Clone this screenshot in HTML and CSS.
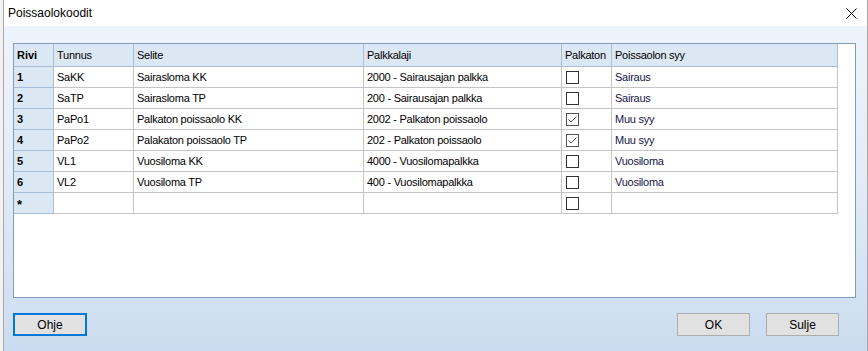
FILE: index.html
```html
<!DOCTYPE html>
<html lang="fi">
<head>
  <meta charset="utf-8" />
  <title>Poissaolokoodit</title>
  <link rel="stylesheet" href="styles.css">
</head>
<body>
  <div class="dialog">
    <!-- title bar -->
    <header class="titlebar">
      <span class="title">Poissaolokoodit</span>
      <span class="close" aria-label="Sulje">
        <svg width="11" height="11" viewBox="0 0 11 11"><path d="M0.5 0.5L10.5 10.5M10.5 0.5L0.5 10.5" stroke="#000" stroke-width="1" fill="none"/></svg>
      </span>
    </header>

    <div class="client">
      <div class="grid-box">
        <table class="grid">
          <colgroup>
            <col style="width:40px"><col style="width:80px"><col style="width:230px">
            <col style="width:198px"><col style="width:50px"><col style="width:226px">
          </colgroup>
          <thead>
            <tr>
              <th class="rowhead">Rivi</th>
              <th>Tunnus</th>
              <th>Selite</th>
              <th>Palkkalaji</th>
              <th>Palkaton</th>
              <th>Poissaolon syy</th>
            </tr>
          </thead>
          <tbody>
            <tr>
              <td class="rowhead">1</td><td>SaKK</td><td>Sairasloma KK</td><td>2000 - Sairausajan palkka</td>
              <td><span class="check"></span></td><td class="syy">Sairaus</td>
            </tr>
            <tr>
              <td class="rowhead">2</td><td>SaTP</td><td>Sairasloma TP</td><td>200 - Sairausajan palkka</td>
              <td><span class="check"></span></td><td class="syy">Sairaus</td>
            </tr>
            <tr>
              <td class="rowhead">3</td><td>PaPo1</td><td>Palkaton poissaolo KK</td><td>2002 - Palkaton poissaolo</td>
              <td><span class="check is-on"><svg width="11" height="11" viewBox="0 0 11 11"><path d="M1.5 5.5L4 8L9.5 2.5" stroke="#5a5a5a" stroke-width="1" fill="none"/></svg></span></td><td class="syy">Muu syy</td>
            </tr>
            <tr>
              <td class="rowhead">4</td><td>PaPo2</td><td>Palakaton poissaolo TP</td><td>202 - Palkaton poissaolo</td>
              <td><span class="check is-on"><svg width="11" height="11" viewBox="0 0 11 11"><path d="M1.5 5.5L4 8L9.5 2.5" stroke="#5a5a5a" stroke-width="1" fill="none"/></svg></span></td><td class="syy">Muu syy</td>
            </tr>
            <tr>
              <td class="rowhead">5</td><td>VL1</td><td>Vuosiloma KK</td><td>4000 - Vuosilomapalkka</td>
              <td><span class="check"></span></td><td class="syy">Vuosiloma</td>
            </tr>
            <tr>
              <td class="rowhead">6</td><td>VL2</td><td>Vuosiloma TP</td><td>400 - Vuosilomapalkka</td>
              <td><span class="check"></span></td><td class="syy">Vuosiloma</td>
            </tr>
            <tr>
              <td class="rowhead star">*</td><td></td><td></td><td></td>
              <td><span class="check"></span></td><td></td>
            </tr>
          </tbody>
        </table>
      </div>

      <div class="actions">
        <button class="btn btn-focus">Ohje</button>
        <span class="spacer"></span>
        <button class="btn">OK</button>
        <button class="btn">Sulje</button>
      </div>
    </div>
  </div>
</body>
</html>
```

FILE: styles.css
```css
/* ---------- base ---------- */
*,*::before,*::after{box-sizing:border-box;margin:0;padding:0;}

body{
  background:#f2f2f2;
  font-family:"Liberation Sans",Arial,sans-serif;
  color:#000;
  height:351px;
  overflow:hidden;
}

/* ---------- window ---------- */
.dialog{
  margin-left:3px;
  width:865px;
  height:351px;
  border-left:1px solid #a9a9a9;
  border-right:1px solid #a9a9a9;
  display:flex;
  flex-direction:column;
}

.titlebar{
  height:26px;
  background:#fff;
  display:flex;
  align-items:center;
  padding-left:4px;
  padding-right:10px;
}
.title{font-size:12px;flex:1;}
.close{display:flex;align-items:center;margin-top:1px;}

.client{
  flex:1;
  background:linear-gradient(180deg,#eef4fb 0%,#e3ecf7 45%,#cbdcf0 100%);
  padding:17px 11px 0 9px;
}

/* ---------- data grid ---------- */
.grid-box{
  height:255px;
  background:#fff;
  border:1px solid #7f9dc0;
}

.grid{
  table-layout:fixed;
  width:824px;
  border-collapse:separate;
  border-spacing:0;
  font-size:11px;
  letter-spacing:-0.25px;
}

.grid th,
.grid td{
  text-align:left;
  padding:0 3px;
  white-space:nowrap;
  overflow:hidden;
  border-right:1px solid #c4c4c4;
  border-bottom:1px solid #c4c4c4;
  height:21px;
  vertical-align:middle;
}

.grid th{
  height:23px;
  font-weight:normal;
  background:#dce7f4;
  border-right-color:#a9bdd6;
  border-bottom-color:#a9bdd6;
}

.grid .rowhead{
  font-weight:bold;
  letter-spacing:0;
  background:#dce7f4;
  border-right-color:#a9bdd6;
  border-bottom-color:#a9bdd6;
}
.grid .star{font-size:13px;padding-top:2px;}

.grid td.syy{color:#16164a;}

.check{
  display:flex;
  align-items:center;
  justify-content:center;
  width:13px;
  height:13px;
  margin-left:1px;
  border:1px solid #333;
  background:#fff;
}
.check.is-on{border-color:#555;}

/* ---------- buttons ---------- */
.actions{
  display:flex;
  gap:16px;
  margin-top:15px;
  padding-right:17px;
}
.spacer{flex:1;}

.btn{
  width:73px;
  height:23px;
  font-family:"Liberation Sans",Arial,sans-serif;
  font-size:12px;
  color:#000;
  background:#e1e1e1;
  border:1px solid #adadad;
}
.btn-focus{
  width:74px;
  border:2px solid #0078d7;
}
```
